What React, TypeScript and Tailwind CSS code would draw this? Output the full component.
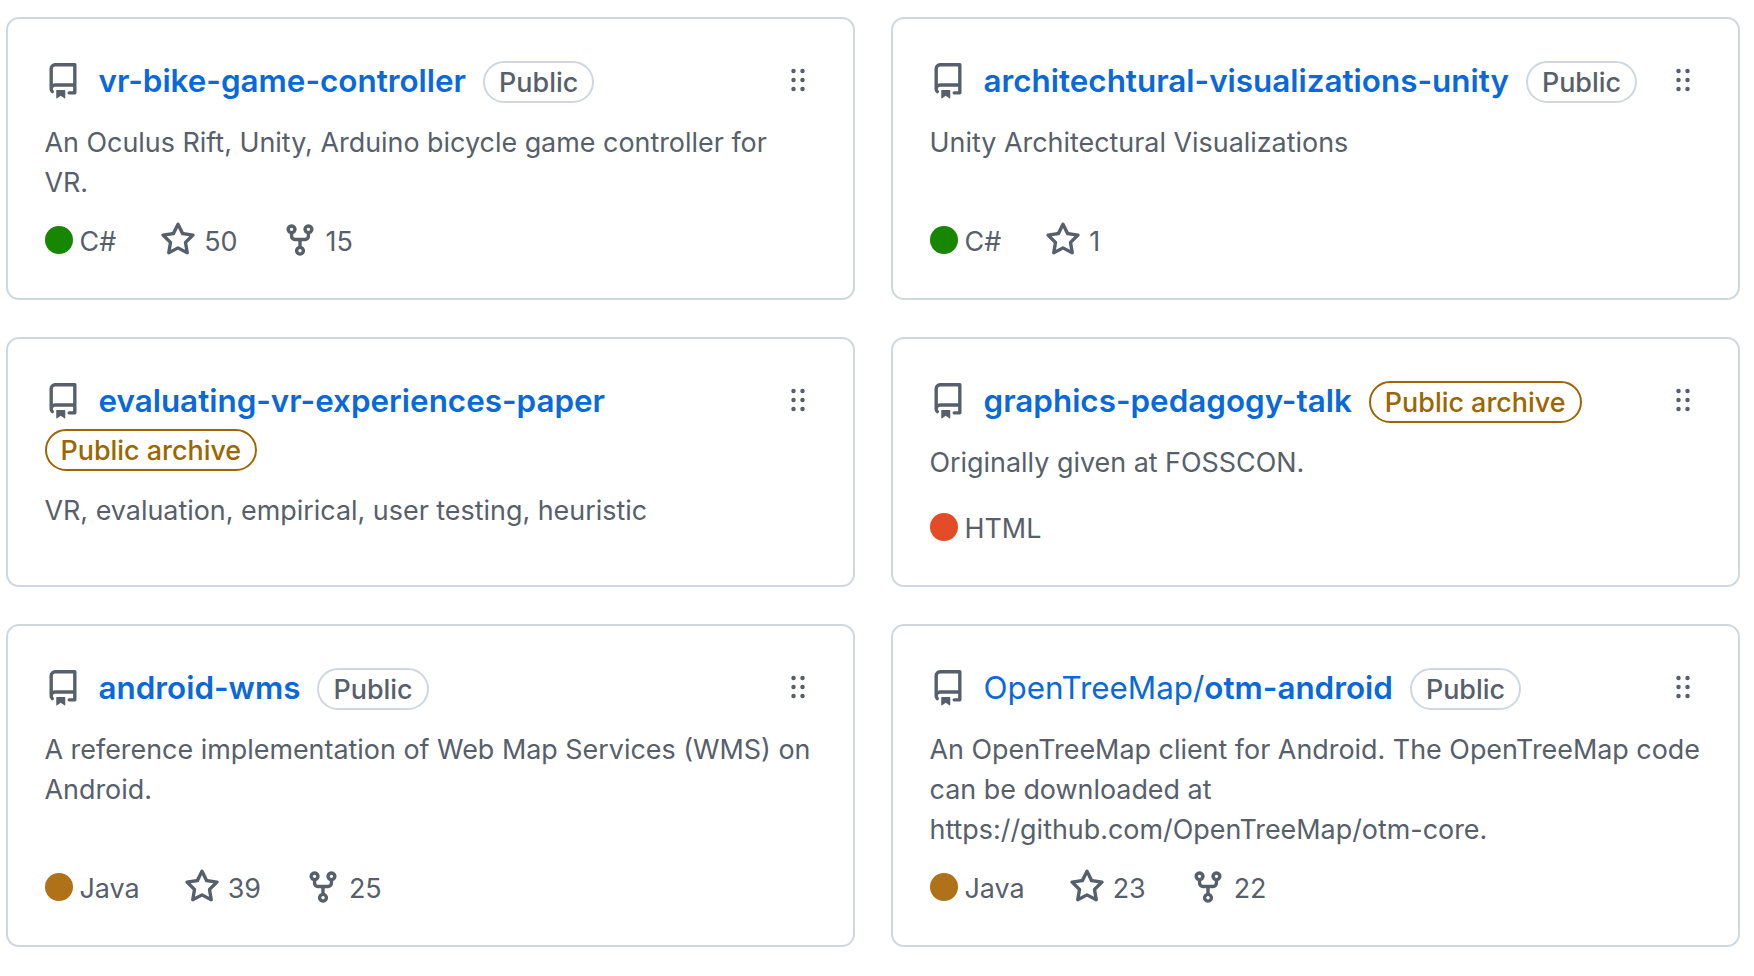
import React from "react";

const repoPath = "M2 2.5A2.5 2.5 0 0 1 4.5 0h8.75a.75.75 0 0 1 .75.75v12.5a.75.75 0 0 1-.75.75h-2.5a.75.75 0 0 1 0-1.5h1.75v-2h-8a1 1 0 0 0-.714 1.7.75.75 0 1 1-1.072 1.05A2.495 2.495 0 0 1 2 11.5Zm10.5-1h-8a1 1 0 0 0-1 1v6.708A2.486 2.486 0 0 1 4.5 9h8ZM5 12.25a.25.25 0 0 1 .25-.25h3.5a.25.25 0 0 1 .25.25v3.25a.25.25 0 0 1-.4.2l-1.45-1.087a.249.249 0 0 0-.3 0L5.4 15.7a.25.25 0 0 1-.4-.2Z";
const starPath = "M8 .25a.75.75 0 0 1 .673.418l1.882 3.815 4.21.612a.75.75 0 0 1 .416 1.279l-3.046 2.97.719 4.192a.751.751 0 0 1-1.088.791L8 12.347l-3.766 1.98a.75.75 0 0 1-1.088-.79l.72-4.194L.818 6.374a.75.75 0 0 1 .416-1.28l4.21-.611L7.327.668A.75.75 0 0 1 8 .25Zm0 2.445L6.615 5.5a.75.75 0 0 1-.564.41l-3.097.45 2.24 2.184a.75.75 0 0 1 .216.664l-.528 3.084 2.769-1.456a.75.75 0 0 1 .698 0l2.77 1.456-.53-3.084a.75.75 0 0 1 .216-.664l2.24-2.183-3.096-.45a.75.75 0 0 1-.564-.41L8 2.694Z";
const forkPath = "M5 5.372v.878c0 .414.336.75.75.75h4.5a.75.75 0 0 0 .75-.75v-.878a2.25 2.25 0 1 1 1.5 0v.878a2.25 2.25 0 0 1-2.25 2.25h-1.5v2.128a2.251 2.251 0 1 1-1.5 0V8.5h-1.5A2.25 2.25 0 0 1 3.5 6.25v-.878a2.25 2.25 0 1 1 1.5 0ZM5 3.25a.75.75 0 1 0-1.5 0 .75.75 0 0 0 1.5 0Zm6.75.75a.75.75 0 1 0 0-1.5.75.75 0 0 0 0 1.5Zm-3 8.75a.75.75 0 1 0-1.5 0 .75.75 0 0 0 1.5 0Z";
const grabPath = "M10 13a1 1 0 1 1 0-2 1 1 0 0 1 0 2Zm0-4a1 1 0 1 1 0-2 1 1 0 0 1 0 2Zm-4 4a1 1 0 1 1 0-2 1 1 0 0 1 0 2Zm5-9a1 1 0 1 1-2 0 1 1 0 0 1 2 0ZM7 8a1 1 0 1 1-2 0 1 1 0 0 1 2 0ZM6 5a1 1 0 1 1 0-2 1 1 0 0 1 0 2Z";

function Icon({ d, className }: { d: string; className: string }) {
  return (
    <svg viewBox="0 0 16 16" fill="currentColor" className={className} aria-hidden="true">
      <path d={d} />
    </svg>
  );
}

type Repo = {
  owner?: string;
  name: string;
  archived?: boolean;
  desc?: string;
  lang: string;
  dot: string;
  stars?: string;
  forks?: string;
};

const repos: Repo[] = [
  { name: "vr-bike-game-controller", desc: "An Oculus Rift, Unity, Arduino bicycle game controller for VR.", lang: "C#", dot: "bg-[#178600]", stars: "50", forks: "15" },
  { name: "architechtural-visualizations-unity", desc: "Unity Architectural Visualizations", lang: "C#", dot: "bg-[#178600]", stars: "1" },
  { name: "evaluating-vr-experiences-paper", archived: true, desc: "VR, evaluation, empirical, user testing, heuristic", lang: "", dot: "" },
  { name: "graphics-pedagogy-talk", archived: true, desc: "Originally given at FOSSCON.", lang: "HTML", dot: "bg-[#e34c26]" },
  { name: "android-wms", desc: "A reference implementation of Web Map Services (WMS) on Android.", lang: "Java", dot: "bg-[#b07219]", stars: "39", forks: "25" },
  { owner: "OpenTreeMap/", name: "otm-android", desc: "An OpenTreeMap client for Android. The OpenTreeMap code can be downloaded at https://github.com/OpenTreeMap/otm-core.", lang: "Java", dot: "bg-[#b07219]", stars: "23", forks: "22" },
];

function Card({ repo }: { repo: Repo }) {
  return (
    <div className="flex flex-col rounded-[13px] border-2 border-[#d0d7de] bg-white pt-[38px] pr-[37px] pb-[37px] pl-[36.5px]">
      <div className="flex items-start">
        <div className="min-w-0 flex-1 text-[31.4px] leading-[48px]">
          <Icon d={repoPath} className="mr-[18px] inline-block h-[36px] w-[36px] align-[-7px] text-[#57606a]" />
          <a className="mr-[17px] font-semibold text-[#0969da]">
            {repo.owner && <span className="font-normal">{repo.owner}</span>}
            {repo.name}
          </a>
          <span
            className={
              repo.archived
                ? "inline-block rounded-full border-2 border-[#9a6700] px-[14px] align-[0px] text-[26.9px] leading-[38px] font-medium text-[#9a6700]"
                : "inline-block rounded-full border-2 border-[#d0d7de] px-[14px] align-[0px] text-[26.9px] leading-[38px] font-medium text-[#57606a]"
            }
          >
            {repo.archived ? "Public archive" : "Public"}
          </span>
        </div>
        <Icon d={grabPath} className="mt-[5px] ml-[18px] h-[36px] w-[36px] flex-none text-[#57606a]" />
      </div>
      {repo.desc && <p className="mt-[17px] mb-[18px] text-[26.9px] leading-[40px] text-[#57606a]">{repo.desc}</p>}
      {repo.lang && (
        <div className="mt-auto flex items-center pt-px text-[26.9px] leading-[40px] text-[#57606a]">
          <span className={"mr-[7px] h-[28px] w-[28px] flex-none -translate-y-px rounded-full " + repo.dot} />
          <span>{repo.lang}</span>
          {repo.stars && (
            <span className="ml-[44px] flex items-center">
              <Icon d={starPath} className="mr-[8px] h-[36px] w-[36px] -translate-y-px" />
              {repo.stars}
            </span>
          )}
          {repo.forks && (
            <span className="ml-[44px] flex items-center">
              <Icon d={forkPath} className="mr-[8px] h-[36px] w-[36px] -translate-y-px" />
              {repo.forks}
            </span>
          )}
        </div>
      )}
    </div>
  );
}

export default function App() {
  return (
    <div className="min-h-[976px] bg-white pt-[17px] pl-[6px] [font-family:Inter,'Liberation_Sans',sans-serif]">
      <div className="grid w-[1734px] grid-cols-2 gap-x-[36px] gap-y-[37px]">
        {repos.map((r) => (
          <Card key={r.name} repo={r} />
        ))}
      </div>
    </div>
  );
}
